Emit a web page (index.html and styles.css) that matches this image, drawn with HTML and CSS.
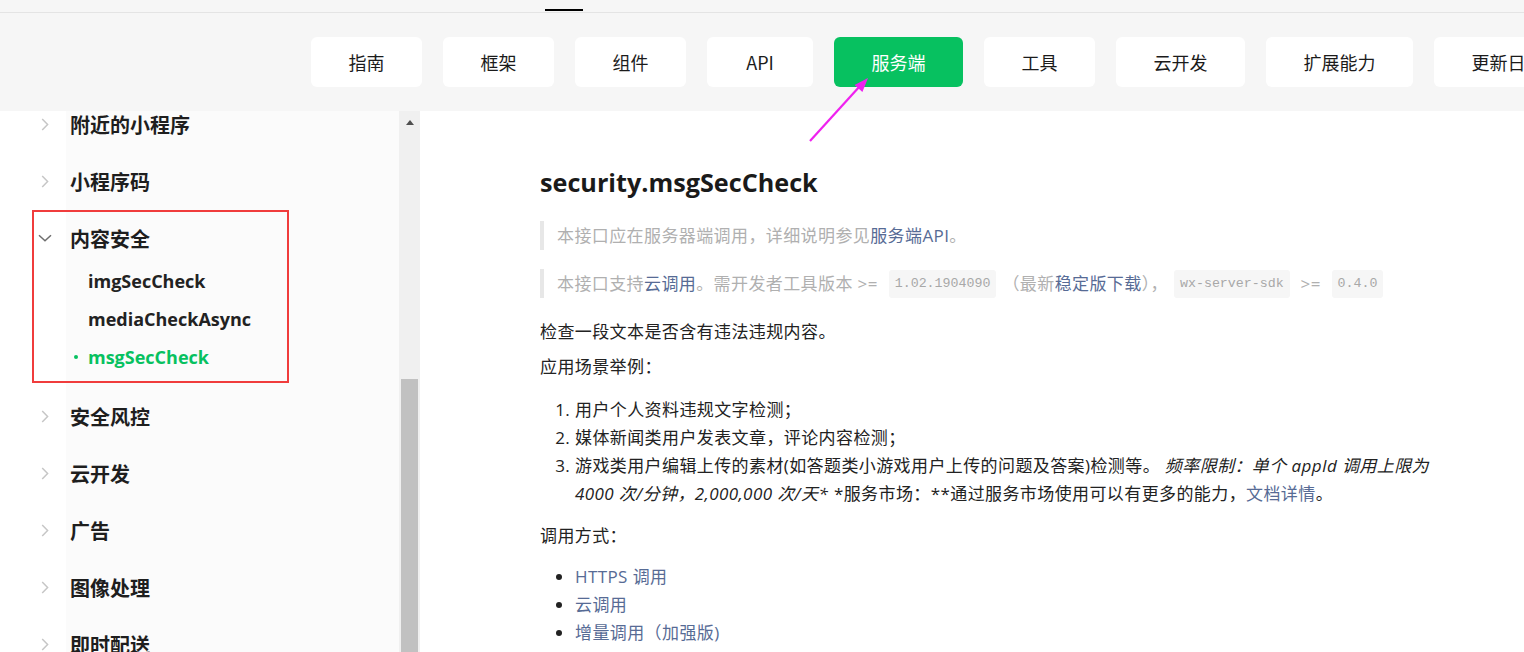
FILE: index.html
```html
<!DOCTYPE html>
<html lang="zh-CN">
<head>
<meta charset="utf-8">
<title>security.msgSecCheck</title>
<link rel="stylesheet" href="styles.css">
</head>
<body>
<div class="topbar"><span class="tab-mark"></span></div>
<nav class="nav">
  <a class="nav-btn">指南</a>
  <a class="nav-btn">框架</a>
  <a class="nav-btn">组件</a>
  <a class="nav-btn">API</a>
  <a class="nav-btn is-active">服务端</a>
  <a class="nav-btn">工具</a>
  <a class="nav-btn">云开发</a>
  <a class="nav-btn">扩展能力</a>
  <a class="nav-btn">更新日志</a>
</nav>
<div class="layout">
  <aside class="sidebar">
    <div class="side-scroll">
      <ul class="menu">
        <li class="menu-item"><span class="chev"><svg width="8" height="13" viewBox="0 0 8 13"><path d="M1.2 1 6.6 6.5 1.2 12" fill="none" stroke="#c6c6c6" stroke-width="1.5"/></svg></span><span>附近的小程序</span></li>
        <li class="menu-item"><span class="chev"><svg width="8" height="13" viewBox="0 0 8 13"><path d="M1.2 1 6.6 6.5 1.2 12" fill="none" stroke="#c6c6c6" stroke-width="1.5"/></svg></span><span>小程序码</span></li>
        <li class="menu-group">
          <div class="menu-item"><span class="chev"><svg width="14" height="8" viewBox="0 0 14 8"><path d="M1 1.2 7 6.8 13 1.2" fill="none" stroke="#6e6e6e" stroke-width="1.5"/></svg></span><span>内容安全</span></div>
          <ul class="submenu">
            <li class="sub-item">imgSecCheck</li>
            <li class="sub-item">mediaCheckAsync</li>
            <li class="sub-item is-active">msgSecCheck</li>
          </ul>
        </li>
        <li class="menu-item"><span class="chev"><svg width="8" height="13" viewBox="0 0 8 13"><path d="M1.2 1 6.6 6.5 1.2 12" fill="none" stroke="#c6c6c6" stroke-width="1.5"/></svg></span><span>安全风控</span></li>
        <li class="menu-item"><span class="chev"><svg width="8" height="13" viewBox="0 0 8 13"><path d="M1.2 1 6.6 6.5 1.2 12" fill="none" stroke="#c6c6c6" stroke-width="1.5"/></svg></span><span>云开发</span></li>
        <li class="menu-item"><span class="chev"><svg width="8" height="13" viewBox="0 0 8 13"><path d="M1.2 1 6.6 6.5 1.2 12" fill="none" stroke="#c6c6c6" stroke-width="1.5"/></svg></span><span>广告</span></li>
        <li class="menu-item"><span class="chev"><svg width="8" height="13" viewBox="0 0 8 13"><path d="M1.2 1 6.6 6.5 1.2 12" fill="none" stroke="#c6c6c6" stroke-width="1.5"/></svg></span><span>图像处理</span></li>
        <li class="menu-item"><span class="chev"><svg width="8" height="13" viewBox="0 0 8 13"><path d="M1.2 1 6.6 6.5 1.2 12" fill="none" stroke="#c6c6c6" stroke-width="1.5"/></svg></span><span>即时配送</span></li>
      </ul>
    </div>
    <div class="scrollbar">
      <span class="scroll-up"></span>
      <span class="scroll-thumb"></span>
    </div>
  </aside>
  <main class="main">
    <h1 class="title">security.msgSecCheck</h1>
    <blockquote class="note">本接口应在服务器端调用，详细说明参见<a class="link">服务端API</a>。</blockquote>
    <blockquote class="note note-2">本接口支持<a class="link">云调用</a>。需开发者工具版本 &gt;= <code class="code">1.02.1904090</code>（最新<a class="link">稳定版下载</a>），<code class="code">wx-server-sdk</code> &gt;= <code class="code">0.4.0</code></blockquote>
    <p class="para para-first">检查一段文本是否含有违法违规内容。</p>
    <p class="para">应用场景举例：</p>
    <ol class="list list-ol">
      <li>用户个人资料违规文字检测；</li>
      <li>媒体新闻类用户发表文章，评论内容检测；</li>
      <li>游戏类用户编辑上传的素材(如答题类小游戏用户上传的问题及答案)检测等。 <em>频率限制：单个 appId 调用上限为 4000 次/分钟，2,000,000 次/天*</em> *服务市场：**通过服务市场使用可以有更多的能力，<a class="link">文档详情</a>。</li>
    </ol>
    <p class="para para-after-list">调用方式：</p>
    <ul class="list list-ul">
      <li><a class="link">HTTPS 调用</a></li>
      <li><a class="link">云调用</a></li>
      <li><a class="link">增量调用（加强版)</a></li>
    </ul>
  </main>
</div>
<div class="annot-box"></div>
<svg class="annot-arrow" width="80" height="80" viewBox="0 0 80 80">
  <line x1="10" y1="71" x2="60" y2="16" stroke="#ef22ef" stroke-width="2.2"/>
  <polygon points="68,8 62.4,22 54.6,15" fill="#ef22ef"/>
</svg>
</body>
</html>
```

FILE: styles.css
```css
* { box-sizing: border-box; }

html, body {
  margin: 0;
  padding: 0;
  background: #fff;
  width: 1524px;
  height: 652px;
  overflow: hidden;
}

body {
  font-family: "Open Sans", "Noto Sans CJK SC", sans-serif;
  color: #222;
  position: relative;
}

a { text-decoration: none; color: inherit; }

.topbar {
  height: 13px;
  background: #f6f6f6;
  border-bottom: 1px solid #e4e4e4;
  display: flex;
  align-items: flex-end;
  padding-left: 545px;
}

.tab-mark {
  width: 38px;
  height: 2px;
  background: #000;
  margin-bottom: 1px;
}

.nav {
  height: 98px;
  background: #f6f6f6;
  display: flex;
  gap: 21px;
  padding: 24px 0 0 311px;
  overflow: hidden;
  white-space: nowrap;
}

.nav-btn {
  flex-shrink: 0;
  height: 50px;
  min-width: 106px;
  padding: 0 37.5px;
  background: #fff;
  border-radius: 6px;
  display: flex;
  align-items: center;
  justify-content: center;
  font-family: "Noto Sans CJK SC", sans-serif;
  font-size: 18px;
  color: #1b1b1b;
}

.nav-btn.is-active {
  background: #07c160;
  color: #fff;
}

.layout {
  display: flex;
  height: 541px;
}

.sidebar {
  width: 420px;
  flex-shrink: 0;
  display: flex;
  overflow: hidden;
  background: linear-gradient(to right, #fff 66px, #fbfbfb 66px);
}

.side-scroll {
  flex: 1;
  overflow: hidden;
}

.menu, .submenu {
  list-style: none;
  margin: 0;
  padding: 0;
}

.menu {
  margin-top: -15.5px;
}

.menu-item {
  height: 57px;
  display: flex;
  align-items: center;
  padding-left: 37px;
  font-family: "Noto Sans CJK SC", sans-serif;
  font-weight: 700;
  font-size: 20px;
  color: #1e1e1e;
}

.chev {
  width: 16px;
  margin-right: 17px;
  display: flex;
  justify-content: center;
  align-items: center;
}

.submenu {
  margin: -5px 0 12px;
}

.sub-item {
  height: 38px;
  display: flex;
  align-items: center;
  padding-left: 74px;
  font-weight: 700;
  font-size: 18px;
  color: #222;
}

.sub-item::before {
  content: "";
  width: 4px;
  height: 4px;
  border-radius: 50%;
  margin-right: 10px;
  background: transparent;
}

.sub-item.is-active { color: #07c160; }
.sub-item.is-active::before { background: #07c160; }

.scrollbar {
  width: 21px;
  flex-shrink: 0;
  background: #f0f0f0;
  display: flex;
  flex-direction: column;
  align-items: center;
}

.scroll-up {
  margin-top: 9px;
  width: 0;
  height: 0;
  border-left: 4.5px solid transparent;
  border-right: 4.5px solid transparent;
  border-bottom: 5px solid #505050;
}

.scroll-thumb {
  margin-top: 254px;
  width: 17px;
  flex: 1;
  background: #c1c1c1;
}

.main {
  flex: 1;
  padding: 53px 74px 0 120px;
  font-family: "Open Sans", "Noto Sans CJK SC", sans-serif;
  font-size: 17px;
  letter-spacing: 0.4px;
  color: #222;
}

.title {
  margin: 0;
  font-size: 25.2px;
  letter-spacing: 0;
  line-height: 36px;
  font-weight: 700;
  color: #1a1a1a;
}

.note {
  margin: 21px 0 0;
  padding-left: 13px;
  border-left: 4px solid #e7e7e7;
  line-height: 29px;
  color: #b0b0b0;
}

.note-2 { margin-top: 19px; }

.link { color: #576b95; }

.code {
  display: inline-block;
  vertical-align: middle;
  margin: -2px 6px 0;
  padding: 5px 6px;
  line-height: 18px;
  font-family: "Liberation Mono", monospace;
  font-size: 13.3px;
  letter-spacing: 0;
  background: #f6f6f6;
  border-radius: 3px;
  color: #a8a8a8;
}

.para {
  margin: 7px 0 0;
  line-height: 28px;
}

.para-first { margin-top: 20px; }
.para-after-list { margin-top: 14px; }

.list {
  margin: 15px 0 0;
  padding-left: 35px;
  line-height: 28px;
}

.list em { padding-right: 1px; }

.list-ul { margin-top: 13px; }

.annot-box {
  position: absolute;
  left: 32px;
  top: 210px;
  width: 257px;
  height: 173px;
  border: 2px solid #f03c3c;
}

.annot-arrow {
  position: absolute;
  left: 800px;
  top: 70px;
}
```
